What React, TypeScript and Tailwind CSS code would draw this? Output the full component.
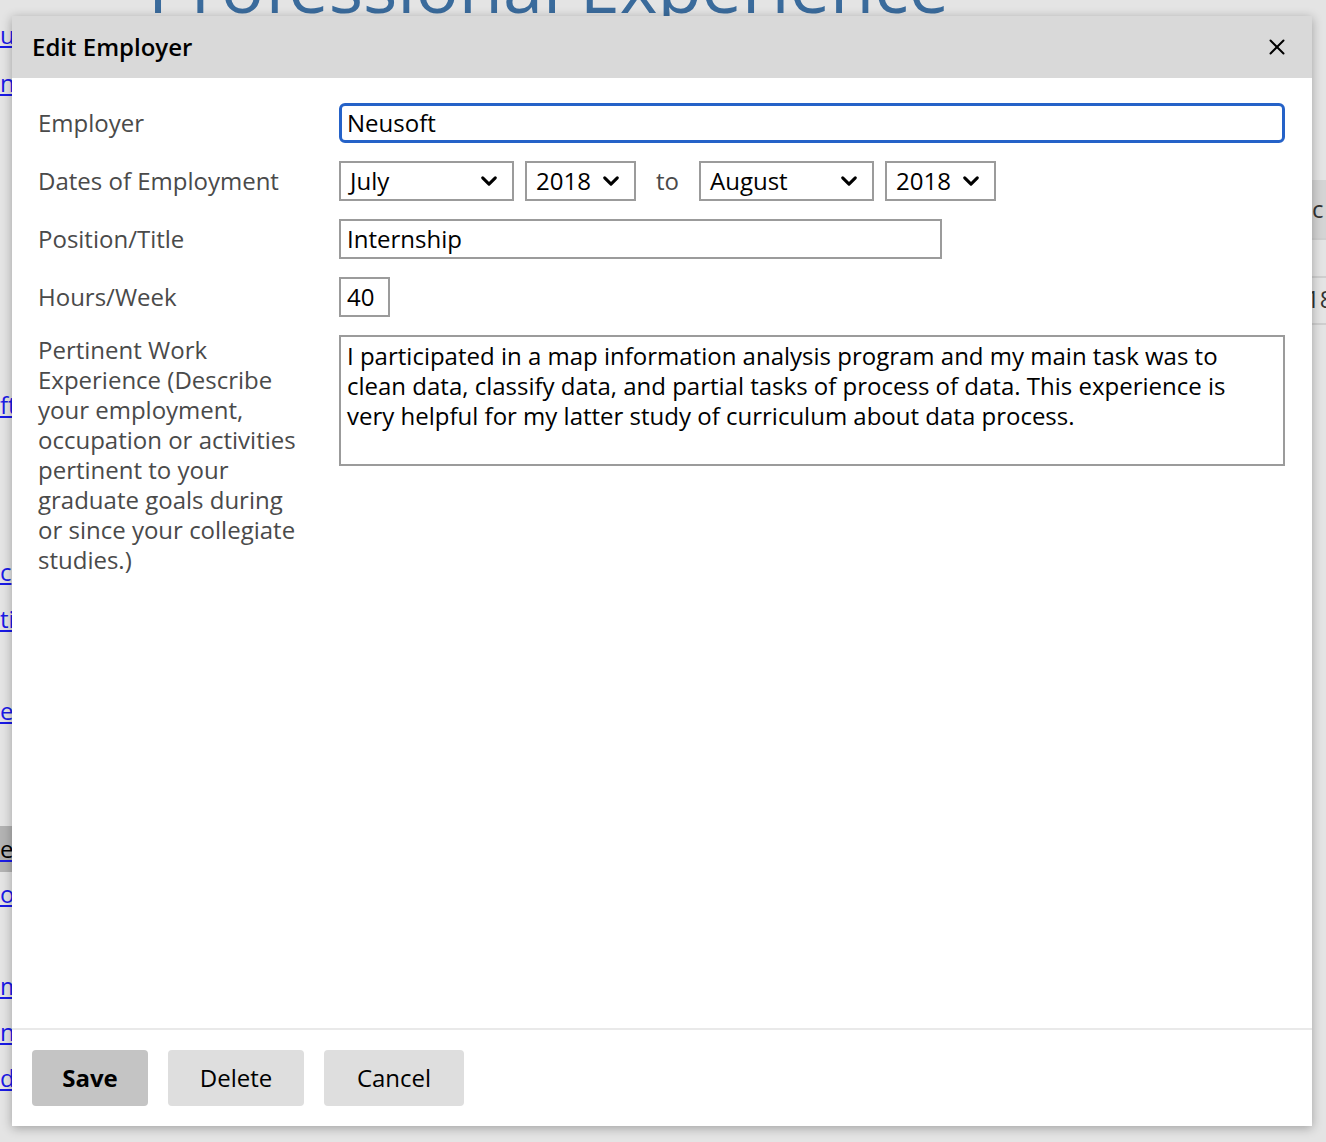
import { X } from "lucide-react";

const font = { fontFamily: '"Open Sans", "Liberation Sans", sans-serif' };

function Chevron() {
  return (
    <svg viewBox="0 0 20 20" className="h-[18px] w-[18px]" aria-hidden>
      <path d="M3 6.5 L10 13.5 L17 6.5" fill="none" stroke="#000" strokeWidth="3.4" strokeLinecap="round" strokeLinejoin="round" />
    </svg>
  );
}

function FakeSelect({ value, width }: { value: string; width: string }) {
  return (
    <div className={`flex h-10 items-center justify-between border-2 border-[#9b9b9b] bg-white pl-[9px] pr-[14px] text-black ${width}`}>
      <span>{value}</span>
      <Chevron />
    </div>
  );
}

export default function App() {
  return (
    <div className="relative h-[1142px] w-[1326px] overflow-hidden bg-[#e4e4e4] text-[24px] leading-[30px]" style={font}>
      {/* page behind the dialog */}
      <div className="-mt-[50px] whitespace-nowrap pl-[148px] text-[72px] leading-[70px] text-[#3a6b9c]">Professional Experience</div>
      <div className="flex flex-col items-start text-[24px] text-[#1a1ae6] underline">
        <span className="mt-[0px]">u</span>
        <span className="mt-[18px]">nt</span>
        <span className="mt-[292px]">ft</span>
        <span className="mt-[137px]">c</span>
        <span className="mt-[17px]">tio</span>
        <span className="mt-[62px]">e</span>
        <span className="mt-[100px] w-[12px] overflow-hidden bg-[#b3b3b3] py-[8px] text-black no-underline">er</span>
        <span className="mt-[7px]">o</span>
        <span className="mt-[62px]">m</span>
        <span className="mt-[16px]">n</span>
        <span className="mt-[16px]">d</span>
      </div>
      <div className="absolute left-[1312px] top-[180px] flex w-[20px] flex-col text-[#333]">
        <div className="h-[60px] border-b-2 border-[#cfcfcf] bg-[#d4d4d4] pt-[14px]">c</div>
        <div className="h-[38px] border-b-2 border-[#cfcfcf]" />
        <div className="-ml-[6px] h-[47px] border-b-2 border-[#cfcfcf] pt-[6px]">18</div>
      </div>

      {/* dialog */}
      <div className="absolute left-[12px] top-[16px] flex h-[1110px] w-[1300px] flex-col bg-white shadow-[0_2px_10px_rgba(0,0,0,0.3)]">
        <div className="flex h-[62px] items-center justify-between bg-[#d9d9d9] pl-[20px] pr-[22px]">
          <h2 className="font-semibold text-black">Edit Employer</h2>
          <X className="h-[26px] w-[26px] text-black" strokeWidth={1.8} />
        </div>

        <div className="flex flex-1 flex-col gap-[18px] pl-[26px] pr-[27px] pt-[25px] text-[#4a4a4a]">
          <div className="flex items-center">
            <label className="w-[301px] shrink-0">Employer</label>
            <div className="flex h-10 flex-1 items-center rounded-[6px] border-[3px] border-[#2562c8] px-[5px] text-black">Neusoft</div>
          </div>
          <div className="flex items-center">
            <label className="w-[301px] shrink-0">Dates of Employment</label>
            <FakeSelect value="July" width="w-[175px]" />
            <div className="ml-[11px]"><FakeSelect value="2018" width="w-[111px]" /></div>
            <span className="mx-[20px]">to</span>
            <FakeSelect value="August" width="w-[175px]" />
            <div className="ml-[11px]"><FakeSelect value="2018" width="w-[111px]" /></div>
          </div>
          <div className="flex items-center">
            <label className="w-[301px] shrink-0">Position/Title</label>
            <div className="flex h-10 w-[603px] items-center border-2 border-[#9b9b9b] px-[6px] text-black">Internship</div>
          </div>
          <div className="flex items-center">
            <label className="w-[301px] shrink-0">Hours/Week</label>
            <div className="flex h-10 w-[51px] items-center border-2 border-[#9b9b9b] px-[6px] text-black">40</div>
          </div>
          <div className="flex items-start">
            <label className="w-[301px] shrink-0 pr-[29px]">
              Pertinent Work Experience (Describe your employment, occupation or activities pertinent to your graduate goals during or since your collegiate studies.)
            </label>
            <div className="h-[131px] flex-1 border-2 border-[#9b9b9b] px-[6px] pt-[4px] text-black">
              I participated in a map information analysis program and my main task was to clean data, classify data, and partial tasks of process of data. This experience is very helpful for my latter study of curriculum about data process.
            </div>
          </div>
        </div>

        <div className="flex h-[98px] items-start gap-[20px] border-t-2 border-[#e9e9e9] pl-[20px] pt-[20px] text-black">
          <button className="h-[56px] w-[116px] rounded-[4px] bg-[#c4c4c4] font-bold">Save</button>
          <button className="h-[56px] w-[136px] rounded-[4px] bg-[#dedede]">Delete</button>
          <button className="h-[56px] w-[140px] rounded-[4px] bg-[#dedede]">Cancel</button>
        </div>
      </div>
    </div>
  );
}
